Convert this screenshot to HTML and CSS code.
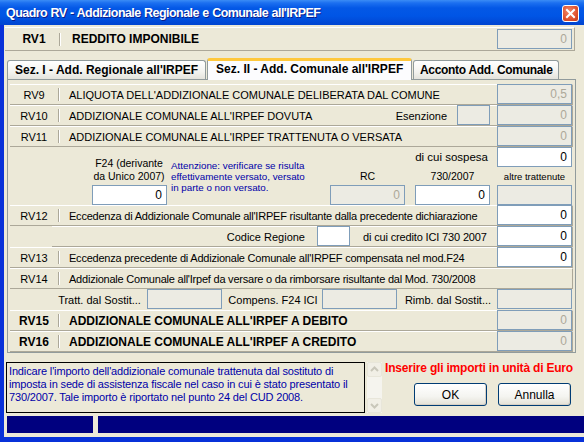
FILE: index.html
```html
<!DOCTYPE html>
<html lang="it">
<head>
<meta charset="utf-8">
<title>Quadro RV</title>
<link rel="stylesheet" href="styles.css">
</head>
<body>
<div class="window">
  <div class="titlebar">
    <span class="title">Quadro RV - Addizionale Regionale e Comunale all'IRPEF</span>
    <span class="close"><svg width="15" height="15" viewBox="0 0 15 15"><path d="M4 4 L11 11 M11 4 L4 11" stroke="#fff" stroke-width="2" stroke-linecap="square"/></svg></span>
  </div>
  <div class="client">
    <div class="rv1">
      <span class="code bold">RV1</span><span class="sep"></span>
      <span class="text bold">REDDITO IMPONIBILE</span>
      <span class="box dis">0</span>
    </div>

    <div class="tabs">
      <span class="tab">Sez. I - Add. Regionale all'IRPEF</span>
      <span class="tab active">Sez. II - Add. Comunale all'IRPEF</span>
      <span class="tab last">Acconto Add. Comunale</span>
    </div>

    <div class="panel">
      <div class="row">
        <span class="code">RV9</span><span class="sep"></span>
        <span class="text">ALIQUOTA DELL'ADDIZIONALE COMUNALE DELIBERATA DAL COMUNE</span>
        <span class="box dis">0,5</span>
      </div>
      <div class="row">
        <span class="code">RV10</span><span class="sep"></span>
        <span class="text">ADDIZIONALE COMUNALE ALL'IRPEF DOVUTA</span>
        <span class="lbl esen">Esenzione</span>
        <span class="box small dis"></span>
        <span class="box dis">0</span>
      </div>
      <div class="row">
        <span class="code">RV11</span><span class="sep"></span>
        <span class="text">ADDIZIONALE COMUNALE ALL'IRPEF TRATTENUTA O VERSATA</span>
        <span class="box dis">0</span>
      </div>

      <div class="block">
        <span class="sosp-lbl">di cui sospesa</span>
        <span class="box on sosp">0</span>
        <span class="f24-lbl">F24 (derivante<br>da Unico 2007)</span>
        <span class="note">Attenzione: verificare se risulta<br>effettivamente versato, versato<br>in parte o non versato.</span>
        <span class="clbl rc-lbl">RC</span>
        <span class="clbl c730-lbl">730/2007</span>
        <span class="clbl altre-lbl">altre trattenute</span>
        <span class="box on f24">0</span>
        <span class="box dis rc">0</span>
        <span class="box on c730">0</span>
        <span class="box dis altre"></span>
      </div>

      <div class="row">
        <span class="code">RV12</span><span class="sep"></span>
        <span class="text lc">Eccedenza di Addizionale Comunale all'IRPEF risultante dalla precedente dichiarazione</span>
        <span class="box on">0</span>
      </div>
      <div class="row indent">
        <span class="lbl cod">Codice Regione</span>
        <span class="box small on"></span>
        <span class="lbl ici">di cui credito ICI 730 2007</span>
        <span class="box on">0</span>
      </div>
      <div class="row">
        <span class="code">RV13</span><span class="sep"></span>
        <span class="text lc">Eccedenza precedente di Addizionale Comunale all'IRPEF compensata nel mod.F24</span>
        <span class="box on">0</span>
      </div>
      <div class="row full">
        <span class="code">RV14</span><span class="sep"></span>
        <span class="text lc">Addizionale Comunale all'Irpef da versare o da rimborsare risultante dal Mod. 730/2008</span>
      </div>
      <div class="row tratt">
        <span class="lbl t1">Tratt. dal Sostit...</span>
        <span class="box dis"></span>
        <span class="lbl t2">Compens. F24 ICI</span>
        <span class="box dis"></span>
        <span class="lbl t3">Rimb. dal Sostit...</span>
        <span class="box dis"></span>
      </div>
      <div class="row">
        <span class="code bold">RV15</span><span class="sep"></span>
        <span class="text bold">ADDIZIONALE COMUNALE ALL'IRPEF A DEBITO</span>
        <span class="box dis">0</span>
      </div>
      <div class="row">
        <span class="code bold">RV16</span><span class="sep"></span>
        <span class="text bold">ADDIZIONALE COMUNALE ALL'IRPEF A CREDITO</span>
        <span class="box dis">0</span>
      </div>
    </div>

    <div class="bottom">
      <div class="help">Indicare l'importo dell'addizionale comunale trattenuta dal sostituto di imposta in sede di assistenza fiscale nel caso in cui è stato presentato il 730/2007. Tale importo è riportato nel punto 24 del CUD 2008.</div>
      <div class="scroll">
        <span class="arrow"><svg width="15" height="15" viewBox="0 0 15 15"><path d="M4 9 L7.5 5.5 L11 9" fill="none" stroke="#c9c7ba" stroke-width="2"/></svg></span>
        <span class="track"></span>
        <span class="arrow"><svg width="15" height="15" viewBox="0 0 15 15"><path d="M4 6 L7.5 9.5 L11 6" fill="none" stroke="#c9c7ba" stroke-width="2"/></svg></span>
      </div>
      <div class="side">
        <div class="warn">Inserire gli importi in unità di Euro</div>
        <div class="buttons">
          <span class="btn">OK</span>
          <span class="btn">Annulla</span>
        </div>
      </div>
    </div>

    <div class="status">
      <span class="bar b1"></span>
      <span class="bar b2"></span>
    </div>
  </div>
</div>
</body>
</html>
```

FILE: styles.css
```css
* { box-sizing: border-box; }
html, body { margin: 0; padding: 0; background: #3a6ea5; }
body { font-family: "Liberation Sans", Arial, sans-serif; font-size: 11px; color: #000; }

.window {
  width: 584px;
  height: 442px;
  overflow: hidden;
  background: #0831d9;
  display: flex;
  flex-direction: column;
}

.titlebar {
  height: 25px;
  flex: none;
  display: flex;
  align-items: center;
  justify-content: space-between;
  padding: 0 5px 0 6px;
  background: linear-gradient(#3b8cf5 0, #1b6ff0 3px, #0458e6 8px, #0055e5 16px, #0146d2 24px);
}
.title {
  color: #fff;
  font-weight: bold;
  font-size: 12.5px;
  letter-spacing: -0.55px;
  word-spacing: 0.5px;
  text-shadow: 1px 1px 0 #0a1e8c;
}
.close {
  width: 17px;
  height: 17px;
  border: 1px solid #fff;
  border-radius: 3px;
  background: radial-gradient(circle at 40% 35%, #f08a6c, #e0522e 60%, #c23a18);
  display: flex;
  align-items: center;
  justify-content: center;
  margin-top: 1px;
}
.close svg { display: block; }

.client {
  flex: 1;
  margin-left: 4px;
  margin-bottom: 5px;
  background: #ece9d8;
  display: flex;
  flex-direction: column;
  padding: 2px 0 0 0;
}

/* generic row pieces */
.code {
  width: 48px;
  flex: none;
  text-align: center;
}
.sep {
  width: 2px;
  height: 13px;
  flex: none;
  border-left: 1px solid #aca899;
  border-right: 1px solid #fff;
}
.text { padding-left: 9px; white-space: nowrap; flex: 1; }
.lc { letter-spacing: -0.22px; }
.bold { font-weight: bold; font-size: 12px; }

.box {
  width: 75px;
  height: 20px;
  flex: none;
  border: 1px solid #7f9db9;
  text-align: right;
  padding: 2px 4px 0 0;
  font-size: 12px;
  line-height: 15px;
}
.box.small { width: 33px; }
.box.dis { background: #ecebe3; color: #aca899; }
.box.on { background: #fff; color: #000; }

.rv1 {
  height: 24px;
  flex: none;
  margin: 0 9px 0 1px;
  display: flex;
  align-items: center;
  border-top: 1px solid #fff;
  border-bottom: 1px solid #aca899;
  border-right: 1px solid #aca899;
  padding-left: 4px;
}
.rv1 .code { width: 50px; font-size: 12px; }
.rv1 .text { padding-left: 11px; }
.rv1 .box { margin-right: 2px; }

.tabs {
  margin-top: 6px;
  height: 22px;
  flex: none;
  display: flex;
  align-items: flex-end;
  padding-left: 3px;
  position: relative;
  z-index: 1;
}
.tab {
  height: 19px;
  border: 1px solid #919b9c;
  border-bottom: none;
  border-radius: 3px 3px 0 0;
  background: linear-gradient(#fff, #f3f3ef 60%, #e4e3dc);
  font-weight: bold;
  font-size: 12px;
  padding: 2px 7px 0 7px;
  white-space: nowrap;
  margin-right: 1px;
}
.tab.active {
  height: 22px;
  background: #fcfcfe;
  border-top: 3px solid #ffc83c;
  padding: 1px 8px 0 8px;
  margin-bottom: -1px;
}
.tab.last {
  width: 146px;
  padding: 2px 0 0 0;
  text-align: center;
  letter-spacing: -0.3px;
}

.panel {
  margin: 0 8px 0 3px;
  height: 274px;
  flex: none;
  border: 1px solid #919b9c;
  padding: 4px 2px 0 2px;
  display: flex;
  flex-direction: column;
}

.row {
  height: 21px;
  flex: none;
  display: flex;
  align-items: center;
  border-top: 1px solid #fff;
  border-bottom: 1px solid #aca899;
  border-right: 1px solid #aca899;
}
.row .box { margin-top: -1px; }
.row.indent { margin-left: 42px; }

.lbl { white-space: nowrap; }
.esen { margin-right: 10px; }
.row .box.small { margin-right: 7px; }
.cod { margin-left: auto; margin-right: 12px; }
.ici { width: 124px; margin-left: 13px; margin-right: 10px; letter-spacing: -0.15px; }
.row.indent .box.small { margin-right: 0; }

.tratt { margin-left: 42px; border: none; }
.tratt .lbl { text-align: center; }
.t1 { width: 95px; }
.t2 { width: 100px; padding-left: 2px; }
.t3 { width: 100px; padding-left: 2px; }

.block {
  height: 58px;
  flex: none;
  display: grid;
  grid-template-columns: 82px 74px 4px 160px 75px 10px 75px 7px 75px;
  grid-template-rows: 20px 18px 20px;
}
.sosp-lbl { grid-column: 1 / 8; grid-row: 1; text-align: right; padding-right: 2px; align-self: center; font-size: 11.5px; }
.sosp { grid-column: 9; grid-row: 1; }
.f24-lbl { grid-column: 2; grid-row: 1 / 3; align-self: end; text-align: center; line-height: 13px; margin-bottom: 2px; white-space: nowrap; font-size: 10.5px; }
.note { grid-column: 4; grid-row: 1 / 4; margin-top: 13px; color: #0000a8; font-size: 9.8px; line-height: 11px; padding-left: 1px; white-space: nowrap; }
.clbl { grid-row: 2; align-self: center; text-align: center; font-size: 10.5px; }
.rc-lbl { grid-column: 5; }
.c730-lbl { grid-column: 7; }
.altre-lbl { grid-column: 9; font-size: 9.5px; }
.f24 { grid-column: 2; grid-row: 3; }
.rc { grid-column: 5; grid-row: 3; }
.c730 { grid-column: 7; grid-row: 3; }
.altre { grid-column: 9; grid-row: 3; }

.bottom {
  margin-top: 9px;
  flex: none;
  display: flex;
  padding-left: 2px;
}
.help {
  width: 359px;
  height: 51px;
  flex: none;
  border: 1px solid #000;
  color: #0000a8;
  font-size: 11px;
  line-height: 13px;
  padding: 2px 2px 0 2px;
  letter-spacing: -0.15px;
}
.scroll {
  width: 15px;
  height: 51px;
  flex: none;
  margin-left: 2px;
  display: flex;
  flex-direction: column;
  background: #f5f4ee;
}
.arrow {
  width: 15px;
  height: 15px;
  border: 1px solid #e8e6da;
  border-radius: 2px;
  background: #f1efe6;
}
.arrow svg { display: block; margin: -1px; }
.track { flex: 1; }
.side {
  flex: 1;
  min-width: 0;
  display: flex;
  flex-direction: column;
  padding-left: 3px;
}
.warn {
  color: #ff0000;
  font-weight: bold;
  font-size: 12px;
  letter-spacing: -0.2px;
  margin-top: -1px;
  white-space: nowrap;
}
.buttons {
  display: flex;
  gap: 11px;
  margin-top: 8px;
  padding-left: 29px;
}
.btn {
  width: 73px;
  height: 23px;
  border: 1px solid #003c74;
  border-radius: 3px;
  background: linear-gradient(#fff, #f4f4f0 60%, #e3e1d6);
  box-shadow: inset -1px -1px 0 #d6d0c5;
  display: flex;
  align-items: center;
  justify-content: center;
  font-size: 12px;
}

.status {
  margin-top: 3px;
  flex: none;
  display: flex;
  gap: 5px;
  padding-left: 3px;
}
.bar { height: 17px; background: #00007f; }
.b1 { width: 86px; flex: none; }
.b2 { flex: 1; }
```
